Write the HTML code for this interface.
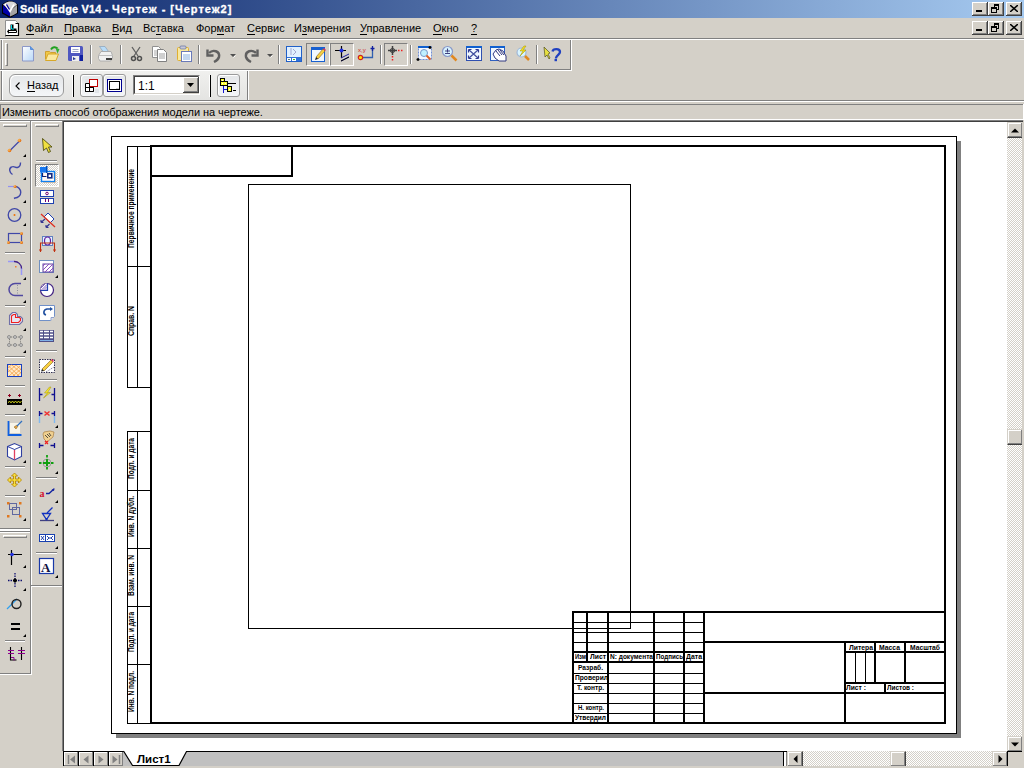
<!DOCTYPE html>
<html><head><meta charset="utf-8">
<style>
*{margin:0;padding:0;box-sizing:border-box}
html,body{width:1024px;height:768px;overflow:hidden;background:#D4D0C8;font-family:"Liberation Sans",sans-serif;font-size:11px;color:#000}
.a{position:absolute}
#title{left:0;top:0;width:1024px;height:18px;background:linear-gradient(to right,#0A246A,#A6CAF0)}
#title .t{top:2.5px;color:#fff;font-weight:bold;font-size:11px;white-space:nowrap;line-height:13px;-webkit-text-stroke:0.3px #fff}
.cb{width:16px;height:14px;background:#D4D0C8;box-shadow:inset -1px -1px #404040,inset 1px 1px #fff,inset -2px -2px #808080}
.menu span{position:absolute;top:22px;white-space:nowrap;line-height:13px}
u{text-decoration:none;border-bottom:1px solid #000}
.sep{width:2px;background:#808080;border-right:1px solid #fff}
.chk{background:#E6E4DF;box-shadow:inset 1px 1px #808080,inset -1px -1px #fff}
.sep1{top:45px;width:2px;height:19px;border-left:1px solid #808080;border-right:1px solid #fff}
.prs{width:24px;height:23px;border-top:1px solid #808080;border-left:1px solid #808080;border-right:1px solid #fff;border-bottom:1px solid #fff}
.rb{background:linear-gradient(#E4E6E8,#F4F6F8);border:1px solid #9A9A9A;box-shadow:inset 1px 1px #fff}
.trk{background-image:repeating-conic-gradient(#fff 0 25%,#D4D0C8 0 50%);background-size:2px 2px}
.sbtn{width:16px;height:16px;background:#D4D0C8;border-top:1px solid #D4D0C8;border-left:1px solid #D4D0C8;border-right:1px solid #404040;border-bottom:1px solid #404040;box-shadow:inset -1px -1px #808080,inset 1px 1px #fff}
.tbb{top:752px;width:15px;height:14px;background:#D4D0C8;border-left:1px solid #000;box-shadow:inset -1px -1px #808080,inset 1px 1px #fff}
.tb{position:absolute;font-size:8px;font-weight:bold;line-height:8px;white-space:nowrap;transform-origin:0 0}
.ts{position:absolute;font-size:9px;font-weight:bold;line-height:8px;white-space:nowrap;transform-origin:0 0}
</style></head><body>
<!-- title bar -->
<div id="title" class="a">
  <svg class="a" style="left:0;top:0" width="20" height="18">
    <path d="M2 4.5L5 2.5L8 1h4l3 1.5l3 2v9l-3 1.5l-4 2.5h-2l-4-2.5l-3-1.5z" fill="#000"/>
    <path d="M3 5l7 6v5.5l-3.5-2l-3.5-2z" fill="#0000A8"/>
    <path d="M10 11l7-6v8l-3.5 2l-3.5 1.5z" fill="#A4A4A4"/>
    <path d="M3 4.5l3-2l3-1h3l3 1l2 2l-7 6z" fill="#D8D8D8"/>
    <path d="M5 4l5 7.5l4-7" stroke="#fff" stroke-width="1.6" fill="none"/>
    <path d="M6.5 4.5l3 5" stroke="#0000A0" stroke-width="1.3"/>
  </svg>
  <div class="a t" style="left:20px;letter-spacing:0.15px">Solid Edge V14 -</div><div class="a t" style="left:112px;letter-spacing:1px">Чертеж - [Чертеж2]</div>
  <div class="a cb" style="left:972px;top:2px"><div class="a" style="left:4px;top:8px;width:6px;height:2px;background:#000"></div></div>
  <div class="a cb" style="left:988px;top:2px"><svg class="a" style="left:0;top:0" width="16" height="14" shape-rendering="crispEdges"><rect x="6" y="2" width="5" height="2"/><rect x="10" y="2" width="1" height="6"/><rect x="6" y="2" width="1" height="3"/><rect x="9" y="7" width="2" height="1"/><rect x="3" y="5" width="6" height="2"/><rect x="3" y="5" width="1" height="6"/><rect x="8" y="5" width="1" height="6"/><rect x="3" y="10" width="6" height="1"/></svg></div>
  <div class="a cb" style="left:1006px;top:2px"><svg class="a" style="left:4px;top:3px" width="8" height="7"><path d="M0 0L8 7M8 0L0 7" stroke="#000" stroke-width="1.5"/></svg></div>
</div>
<!-- menu bar -->
<div class="a menu" style="left:0;top:18px;width:1024px;height:20px">
  <svg class="a" style="left:5px;top:2px" width="15" height="17">
    <path d="M0.5 17V0.5h10l3 3" fill="none" stroke="#909090"/>
    <path d="M1 1h9.5l3 3v11h-12.5z" fill="#fff"/>
    <path d="M10.5 3.5h3v12h-13" fill="none" stroke="#000" stroke-width="1.2"/>
    <path d="M5.5 4.5h3v4h3v2h-6z" fill="#000"/>
    <path d="M6.5 5v4h2.5" stroke="#00E0F0" fill="none"/>
    <path d="M3.5 10.5h8v2h-8z" fill="#fff" stroke="#000"/>
    <path d="M4 9v5l-2-2.5z" fill="#000"/>
  </svg>
</div>
<div class="menu">
  <span style="left:26px"><u>Ф</u>айл</span>
  <span style="left:64px"><u>П</u>равка</span>
  <span style="left:112px"><u>В</u>ид</span>
  <span style="left:143px">Вс<u>т</u>авка</span>
  <span style="left:196px">Фор<u>м</u>ат</span>
  <span style="left:247px"><u>С</u>ервис</span>
  <span style="left:294px">И<u>з</u>мерения</span>
  <span style="left:360px"><u>У</u>правление</span>
  <span style="left:433px"><u>О</u>кно</span>
  <span style="left:471px"><u>?</u></span>
</div>
<div class="a cb" style="left:972px;top:21px"><div class="a" style="left:4px;top:8px;width:6px;height:2px;background:#000"></div></div>
<div class="a cb" style="left:988px;top:21px"><svg class="a" style="left:0;top:0" width="16" height="14" shape-rendering="crispEdges"><rect x="6" y="2" width="5" height="2"/><rect x="10" y="2" width="1" height="6"/><rect x="6" y="2" width="1" height="3"/><rect x="9" y="7" width="2" height="1"/><rect x="3" y="5" width="6" height="2"/><rect x="3" y="5" width="1" height="6"/><rect x="8" y="5" width="1" height="6"/><rect x="3" y="10" width="6" height="1"/></svg></div>
<div class="a cb" style="left:1006px;top:21px"><svg class="a" style="left:4px;top:3px" width="8" height="7"><path d="M0 0L8 7M8 0L0 7" stroke="#000" stroke-width="1.5"/></svg></div>

<!-- rebar lines -->
<div class="a" style="left:0;top:38px;width:1024px;height:1px;background:#808080"></div>
<div class="a" style="left:0;top:39px;width:1024px;height:1px;background:#fff"></div>


<!-- toolbar row 1 -->
<div class="a" style="left:1px;top:40px;width:1px;height:30px;background:#808080"></div>
<div class="a" style="left:2px;top:40px;width:1px;height:30px;background:#fff"></div>
<div class="a" style="left:0;top:69px;width:571px;height:1px;background:#808080"></div>
<div class="a" style="left:0;top:70px;width:572px;height:1px;background:#fff"></div>
<div class="a" style="left:570px;top:40px;width:1px;height:30px;background:#808080"></div>
<div class="a" style="left:571px;top:39px;width:1px;height:32px;background:#fff"></div>
<!-- gripper -->
<div class="a" style="left:5px;top:43px;width:3px;height:23px;border-left:1px solid #fff;border-top:1px solid #fff;border-right:1px solid #808080;border-bottom:1px solid #808080"></div>
<!-- separators -->
<div class="a sep1" style="left:90px"></div>
<div class="a sep1" style="left:120px"></div>
<div class="a sep1" style="left:198px"></div>
<div class="a sep1" style="left:278px"></div>
<div class="a sep1" style="left:380px"></div>
<div class="a sep1" style="left:410px"></div>
<div class="a sep1" style="left:536px"></div>
<!-- pressed buttons -->
<div class="a prs" style="left:306px;top:43px"></div>
<div class="a prs" style="left:330px;top:43px"></div>
<div class="a prs" style="left:384px;top:43px"></div>
<svg class="a" style="left:0;top:0" width="580" height="70">
 <!-- new -->
 <g transform="translate(22,46)">
  <defs><linearGradient id="gNew" x1="0" y1="0" x2="1" y2="1"><stop offset="0" stop-color="#fff"/><stop offset="1" stop-color="#B8D8F8"/></linearGradient></defs>
  <path d="M0.5 0.5h8l3 3v11.5h-11z" fill="url(#gNew)" stroke="#8C98C8"/>
  <path d="M8.5 0.5v3h3" fill="#5AA0E8" stroke="#5A8CD8"/>
 </g>
 <!-- open -->
 <g transform="translate(45,46)">
  <path d="M0.5 13V5.5h4l1 1h5v2" fill="#F0C848" stroke="#D0A030"/>
  <path d="M0.5 14.5l2.5-6.5h10.5l-2.5 6.5z" fill="#FAE8A0" stroke="#D8A828"/>
  <path d="M6 3.5c1.5-2.5 4.5-3 6.5-1" stroke="#20A020" stroke-width="2" fill="none"/>
  <path d="M10.5 2l4 1l-2 4.5z" fill="#30B030"/>
 </g>
 <!-- save -->
 <g transform="translate(68,46)">
  <rect x="0" y="0" width="15" height="15" rx="1.5" fill="#5058C0"/>
  <rect x="3" y="1" width="9" height="6" fill="#fff"/>
  <path d="M4.5 3.5h6M4.5 5.5h6" stroke="#A0A8C8"/>
  <rect x="4" y="10" width="7" height="5" fill="#F0F0F0"/>
  <path d="M5 11l3 2l-3 1z" fill="#283890"/>
  <rect x="12" y="9" width="3" height="6" fill="#1020A0"/>
 </g>
 <!-- print -->
 <g transform="translate(98,46)">
  <path d="M1.5 0.5h5.5l3.5 5h-5.5z" fill="#B8DCF8" stroke="#8AA0B8" stroke-width="0.7"/>
  <path d="M0.5 9.5l2.5-4h10l1.5 4v3l-2 2.5h-10.5l-1.5-2.5z" fill="#F2F2F2" stroke="#A8A8A8" stroke-width="0.9"/>
  <path d="M1 9.5h13.5" stroke="#C0C0C0"/>
  <rect x="8" y="12" width="6" height="2" fill="#404040"/>
 </g>
 <!-- cut -->
 <g transform="translate(131,46)" stroke="#505050" fill="none">
  <path d="M1 1l6 9M9 1l-6 9" stroke-width="1.3" stroke="#606060"/>
  <circle cx="2.5" cy="12.5" r="2" stroke-width="1.5"/>
  <circle cx="8.5" cy="12.5" r="2" stroke-width="1.5"/>
 </g>
 <!-- copy -->
 <g transform="translate(152,46)">
  <path d="M0.5 0.5h6l2 2v9h-8z" fill="#fff" stroke="#909090"/>
  <path d="M2 5h5M2 7h5M2 9h5" stroke="#A8A8A8"/>
  <path d="M5.5 3.5h6l3 3v9h-9z" fill="#fff" stroke="#808080"/>
  <path d="M7 8h6M7 10h6M7 12h6" stroke="#A0A0A0"/>
 </g>
 <!-- paste -->
 <g transform="translate(177,46)">
  <rect x="0.5" y="1.5" width="11" height="13" rx="1" fill="#F8E8A0" stroke="#E0B030"/>
  <rect x="3" y="0" width="6" height="3" rx="1" fill="#C8C8D8" stroke="#6070A0" stroke-width="0.7"/>
  <rect x="4.5" y="5.5" width="10" height="10" fill="#fff" stroke="#6A7AB8"/>
  <path d="M6 9h7M6 11h7M6 13h7" stroke="#88B0E0"/>
 </g>
 <!-- undo -->
 <g transform="translate(206,48)" fill="none" stroke="#606060" stroke-width="2.4">
  <path d="M3 5c4-4 11-2 10 4c-1 3-3 4-5 5"/>
  <path d="M1.5 1.5v6h6" stroke-linejoin="miter"/>
 </g>
 <path d="M230 54h6l-3 3z" fill="#505050"/><path d="M233.5 57.5l2-2" stroke="#fff"/>
 <!-- redo -->
 <g transform="translate(244,48)" fill="none" stroke="#606060" stroke-width="2.4">
  <path d="M12 5c-4-4-11-2-10 4c1 3 3 4 5 5"/>
  <path d="M13.5 1.5v6h-6"/>
 </g>
 <path d="M267 54h6l-3 3z" fill="#505050"/><path d="M270.5 57.5l2-2" stroke="#fff"/>
 <!-- sheet setup -->
 <g transform="translate(286,46)">
  <rect x="0.5" y="0.5" width="15" height="15" fill="#3070D8" stroke="#2060C8"/>
  <rect x="1" y="1" width="14" height="10" fill="#E0F0FF"/>
  <path d="M5 2v7M7 3l3 3l-3 3" stroke="#A0A8D0" fill="none"/>
  <rect x="1" y="12" width="4" height="3" fill="#fff"/><rect x="6" y="12" width="4" height="3" fill="#fff"/>
  <path d="M2 13.5h2" stroke="#608080"/><path d="M7 13.5h2" stroke="#30C030"/>
 </g>
 <!-- draw (pencil window) -->
 <g transform="translate(311,47)">
  <rect x="0" y="0" width="14" height="15" fill="#1860D0"/>
  <rect x="1" y="3" width="12" height="11" fill="#F0F8FF"/>
  <path d="M5 10l7-8l2 2l-7 8z" fill="#F8D040" stroke="#806020" stroke-width="0.6"/>
  <path d="M5 10l-1 3l3-1z" fill="#202020"/>
  <path d="M12 2l1-1l2 2l-1 1z" fill="#E03060"/>
 </g>
 <!-- constraint -->
 <g transform="translate(334,46)">
  <path d="M1 4.5h11M7.5 0v12" stroke="#000" stroke-width="1.2"/>
  <circle cx="7.5" cy="4.5" r="2" fill="#2030E0"/>
  <path d="M7 12l8-4M7 15l8-4" stroke="#2020A0" stroke-width="1"/>
  <path d="M7 15l8-4" stroke="#000"/>
 </g>
 <!-- xy -->
 <g transform="translate(358,46)">
  <text x="0" y="6" font-size="6" fill="#D02020" font-family="Liberation Sans">x,y</text>
  <path d="M4 11.5h10.5v-9.5" stroke="#3060B0" stroke-width="1.3" fill="none"/>
  <circle cx="2.5" cy="11.5" r="2.2" fill="#FFE000" stroke="#D02020" stroke-width="1.2"/>
  <path d="M14.5 0v5M12.5 2.5h4" stroke="#1020A0" stroke-width="1.3"/>
 </g>
 <!-- crosshair red dots -->
 <g transform="translate(388,46)">
  <path d="M0 4.5h9M4.5 0v9" stroke="#404040" stroke-width="1.5"/>
  <circle cx="4.5" cy="4.5" r="2" fill="none" stroke="#404040" stroke-width="1.2"/>
  <path d="M10 4.5h6M4.5 10v6" stroke="#F02020" stroke-width="1.5" stroke-dasharray="1.5 1.5"/>
 </g>
 <!-- zoom area -->
 <g transform="translate(417,46)">
  <rect x="1.5" y="0.5" width="13" height="13" fill="#F4F8FF" stroke="#7090D8" stroke-dasharray="2 1"/>
  <rect x="1" y="0" width="13" height="2" fill="#1060D0"/>
  <circle cx="7" cy="7" r="3.5" fill="#C0F0FF" stroke="#7898C8"/>
  <path d="M9.5 9.5l4 4" stroke="#E06020" stroke-width="2"/>
  <path d="M13 0v3M11.5 1.5h3M1 12v3M-0.5 13.5h3" stroke="#000" stroke-width="1.3"/>
 </g>
 <!-- zoom -->
 <g transform="translate(442,46)">
  <circle cx="5.5" cy="5.5" r="5" fill="#D8F4FF" stroke="#8898C8" stroke-width="1.2"/>
  <path d="M3 5h5M5.5 2.5v4M3 7.5h5" stroke="#404080" stroke-width="1.1"/>
  <path d="M9.5 9.5l5 5" stroke="#E08820" stroke-width="2.5"/>
 </g>
 <!-- fit -->
 <g transform="translate(466,46)">
  <rect x="0.5" y="0.5" width="15" height="14" fill="#F0F8FF" stroke="#3050B0"/>
  <rect x="0" y="0" width="16" height="2" fill="#1060D0"/>
  <path d="M3 4l9 8M12 4l-9 8" stroke="#4050A0" stroke-width="1.3"/>
  <path d="M2.5 3.5h3M2.5 3.5v3M12.5 3.5h-3M12.5 3.5v3M2.5 12.5h3M2.5 12.5v-3M12.5 12.5h-3M12.5 12.5v-3" stroke="#303890" stroke-width="1.2"/>
 </g>
 <!-- pan -->
 <g transform="translate(490,46)">
  <rect x="0.5" y="0.5" width="14" height="14" fill="#F0F8FF" stroke="#3060C0"/>
  <rect x="0" y="0" width="15" height="2" fill="#1060D0"/>
  <path d="M5 12l-2-4l3-4l3 -1l4 2l3 5v5h-7z" fill="#fff" stroke="#303880"/>
  <path d="M6 5l4 5M8 4l4 5M10 4l4 5" stroke="#303880"/>
 </g>
 <!-- zoom lightning -->
 <g transform="translate(516,46)">
  <circle cx="5.5" cy="6.5" r="4.5" fill="#D8F4FF" stroke="#A0B8D8" stroke-width="1.2"/>
  <path d="M8 0l-4 5h3l-3 5l6-6h-3l3-4z" fill="#F8E020" stroke="#A09000" stroke-width="0.5"/>
  <path d="M9 10l4 4" stroke="#E08820" stroke-width="2.5"/>
 </g>
 <!-- help -->
 <g transform="translate(544,47)">
  <path d="M0 0l6 6l-2 1l2 4l-1 1l-2-4l-2 2z" fill="#E8E040" stroke="#505020" stroke-width="0.7"/>
  <path d="M8.5 4.5c0.5-3 7.5-3.5 7.5 0.5c0 2.5-3.5 3-4 6v0.5" stroke="#2040C0" stroke-width="2.3" fill="none"/><rect x="10.5" y="12" width="2.5" height="2.2" fill="#2040C0"/>
 </g>
</svg>

<!-- toolbar row 2 (ribbon) -->
<div class="a" style="left:2px;top:71px;width:246px;height:29px;background:linear-gradient(#F0F0EE,#E4E4E2)"></div>
<div class="a" style="left:1px;top:71px;width:1px;height:30px;background:#808080"></div>
<div class="a" style="left:2px;top:71px;width:1px;height:30px;background:#fff"></div>
<div class="a" style="left:247px;top:71px;width:1px;height:29px;background:#808080"></div>
<div class="a" style="left:248px;top:71px;width:1px;height:29px;background:#fff"></div>

<div class="a rb" style="left:9px;top:74px;width:55px;height:23px;border-radius:6px"></div>
<svg class="a" style="left:14px;top:81px" width="8" height="10"><path d="M5.5 1.5L2 5l3.5 3.5" stroke="#000" stroke-width="1.1" fill="none"/></svg>
<div class="a" style="left:27px;top:79px;font-size:11px;line-height:13px;white-space:nowrap"><u>Н</u>азад</div>
<div class="a" style="left:73px;top:75px;width:1px;height:22px;background:#000"></div>
<div class="a" style="left:72px;top:75px;width:1px;height:22px;background:#fff"></div>
<div class="a rb" style="left:80px;top:74px;width:23px;height:23px;border-radius:3px"></div>
<div class="a rb" style="left:103px;top:74px;width:23px;height:23px;border-radius:3px"></div>
<svg class="a" style="left:85px;top:79px" width="14" height="14">
 <rect x="0" y="0" width="4" height="4" fill="#E0E4E8"/><rect x="10" y="10" width="4" height="4" fill="#E0E4E8"/>
 <rect x="4.5" y="0.5" width="8" height="7" fill="#fff" stroke="#C00000"/>
 <path d="M0.5 4.5h4v8h-4zM0.5 8.5h8v4h-8zM4.5 8.5v4" fill="#fff" stroke="#000"/>
 <path d="M4.5 8.5h4v4" fill="none" stroke="#000"/>
</svg>
<svg class="a" style="left:107px;top:79px" width="15" height="14">
 <rect x="0.5" y="0.5" width="14" height="12" fill="#fff" stroke="#000090"/>
 <rect x="2.5" y="2.5" width="10" height="8" fill="#fff" stroke="#000"/>
 <path d="M9 9.5h3" stroke="#D0D0D0"/>
</svg>
<!-- combo -->
<div class="a" style="left:133px;top:75px;width:67px;height:20px;background:#fff;border-top:1px solid #808080;border-left:1px solid #808080;border-right:1px solid #fff;border-bottom:1px solid #fff"></div>
<div class="a" style="left:134px;top:76px;width:65px;height:18px;border-top:1px solid #404040;border-left:1px solid #404040;border-right:1px solid #D4D0C8;border-bottom:1px solid #D4D0C8"></div>
<div class="a" style="left:138px;top:79px;font-size:12px;line-height:14px">1:1</div>
<div class="a cb" style="left:183px;top:77px;width:16px;height:16px"><svg class="a" style="left:4px;top:6px" width="8" height="4"><path d="M0 0h7l-3.5 4z" fill="#000"/></svg></div>
<div class="a" style="left:210px;top:75px;width:1px;height:22px;background:#000"></div>
<div class="a" style="left:209px;top:75px;width:1px;height:22px;background:#fff"></div>
<div class="a rb" style="left:217px;top:74px;width:23px;height:23px;border-radius:3px"></div>
<svg class="a" style="left:220px;top:78px" width="17" height="16" shape-rendering="crispEdges">
 <rect x="0.5" y="0.5" width="4" height="4" fill="#FFFF30" stroke="#000"/>
 <rect x="0.5" y="3.5" width="7" height="4" fill="#FFFF30" stroke="#000"/>
 <rect x="2" y="1.5" width="1" height="1" fill="#fff"/><rect x="2" y="5" width="1" height="1" fill="#fff"/><rect x="5" y="5" width="1" height="1" fill="#fff"/>
 <rect x="8" y="5" width="8" height="1" fill="#000"/>
 <rect x="3" y="8" width="1" height="7" fill="#1818D0"/>
 <rect x="4" y="11" width="3" height="1" fill="#1818D0"/>
 <rect x="7.5" y="8.5" width="4" height="5" fill="#FFFF30" stroke="#000"/>
 <rect x="9" y="10.5" width="1" height="1" fill="#fff"/>
 <rect x="13" y="12" width="3" height="1" fill="#000"/>
</svg>
<!-- etched lines -->
<div class="a" style="left:0;top:100px;width:1024px;height:1px;background:#808080"></div>
<div class="a" style="left:0;top:101px;width:1024px;height:1px;background:#fff"></div>

<!-- prompt bar -->
<div class="a" style="left:0;top:104px;width:1023px;height:1px;background:#808080"></div>
<div class="a" style="left:1023px;top:104px;width:1px;height:16px;background:#fff"></div>
<div class="a" style="left:0;top:105px;width:1px;height:14px;background:#808080"></div>
<div class="a" style="left:2px;top:106px;line-height:13px;white-space:nowrap;letter-spacing:-0.05px">Изменить способ отображения модели на чертеже.</div>
<div class="a" style="left:0;top:119px;width:1024px;height:1px;background:#fff"></div>

<!-- drawing area -->
<div class="a" style="left:0;top:120px;width:1023px;height:1px;background:#808080"></div>
<div class="a" style="left:62px;top:120px;width:961px;height:631px;background:#fff;border-left:1px solid #808080;border-top:1px solid #808080"></div>
<div class="a" style="left:63px;top:121px;width:960px;height:630px;border-left:1px solid #404040;border-top:1px solid #404040"></div>

<!-- left toolbars -->
<div class="a" style="left:30px;top:121px;width:1px;height:553px;background:#808080"></div>
<div class="a" style="left:31px;top:121px;width:1px;height:554px;background:#fff"></div>
<div class="a" style="left:0px;top:121px;width:30px;height:1px;background:#fff"></div>
<div class="a" style="left:32px;top:121px;width:30px;height:1px;background:#fff"></div>
<div class="a" style="left:0px;top:528px;width:30px;height:1px;background:#808080"></div>
<div class="a" style="left:0px;top:529px;width:30px;height:2px;background:#fff"></div>
<div class="a" style="left:0px;top:531px;width:30px;height:1px;background:#808080"></div>
<div class="a" style="left:0px;top:532px;width:30px;height:1px;background:#fff"></div>
<div class="a" style="left:0px;top:673px;width:30px;height:1px;background:#808080"></div>
<div class="a" style="left:0px;top:674px;width:32px;height:1px;background:#fff"></div>
<div class="a" style="left:31px;top:585px;width:31px;height:1px;background:#808080"></div>
<div class="a" style="left:32px;top:586px;width:30px;height:1px;background:#fff"></div>
<div class="a" style="left:3px;top:124px;width:24px;height:3px;border-left:1px solid #fff;border-top:1px solid #fff;border-right:1px solid #808080;border-bottom:1px solid #808080"></div>
<div class="a" style="left:35px;top:124px;width:24px;height:3px;border-left:1px solid #fff;border-top:1px solid #fff;border-right:1px solid #808080;border-bottom:1px solid #808080"></div>
<div class="a" style="left:3px;top:535px;width:24px;height:3px;border-left:1px solid #fff;border-top:1px solid #fff;border-right:1px solid #808080;border-bottom:1px solid #808080"></div>
<div class="a" style="left:5px;top:252px;width:20px;height:1px;background:#808080"></div>
<div class="a" style="left:5px;top:253px;width:20px;height:1px;background:#fff"></div>
<div class="a" style="left:5px;top:305px;width:20px;height:1px;background:#808080"></div>
<div class="a" style="left:5px;top:306px;width:20px;height:1px;background:#fff"></div>
<div class="a" style="left:5px;top:356px;width:20px;height:1px;background:#808080"></div>
<div class="a" style="left:5px;top:357px;width:20px;height:1px;background:#fff"></div>
<div class="a" style="left:5px;top:385px;width:20px;height:1px;background:#808080"></div>
<div class="a" style="left:5px;top:386px;width:20px;height:1px;background:#fff"></div>
<div class="a" style="left:5px;top:414px;width:20px;height:1px;background:#808080"></div>
<div class="a" style="left:5px;top:415px;width:20px;height:1px;background:#fff"></div>
<div class="a" style="left:5px;top:466px;width:20px;height:1px;background:#808080"></div>
<div class="a" style="left:5px;top:467px;width:20px;height:1px;background:#fff"></div>
<div class="a" style="left:5px;top:495px;width:20px;height:1px;background:#808080"></div>
<div class="a" style="left:5px;top:496px;width:20px;height:1px;background:#fff"></div>
<div class="a" style="left:5px;top:640px;width:20px;height:1px;background:#808080"></div>
<div class="a" style="left:5px;top:641px;width:20px;height:1px;background:#fff"></div>
<div class="a" style="left:36px;top:160px;width:21px;height:1px;background:#808080"></div>
<div class="a" style="left:36px;top:161px;width:21px;height:1px;background:#fff"></div>
<div class="a" style="left:36px;top:350px;width:21px;height:1px;background:#808080"></div>
<div class="a" style="left:36px;top:351px;width:21px;height:1px;background:#fff"></div>
<div class="a" style="left:36px;top:379px;width:21px;height:1px;background:#808080"></div>
<div class="a" style="left:36px;top:380px;width:21px;height:1px;background:#fff"></div>
<div class="a" style="left:36px;top:477px;width:21px;height:1px;background:#808080"></div>
<div class="a" style="left:36px;top:478px;width:21px;height:1px;background:#fff"></div>
<div class="a" style="left:36px;top:552px;width:21px;height:1px;background:#808080"></div>
<div class="a" style="left:36px;top:553px;width:21px;height:1px;background:#fff"></div>
<div class="a" style="left:35px;top:164px;width:24px;height:23px;border-top:1px solid #808080;border-left:1px solid #808080;border-right:1px solid #fff;border-bottom:1px solid #fff;background-image:repeating-conic-gradient(#fff 0 25%,#D4D0C8 0 50%);background-size:2px 2px"></div>
<svg class="a" style="left:0;top:0" width="64" height="680">
<defs>
 <radialGradient id="org" cx="0.35" cy="0.35" r="0.7"><stop offset="0" stop-color="#FFC060"/><stop offset="1" stop-color="#E06000"/></radialGradient>
</defs>
<g id="tris" fill="#000">
 <path d="M26 154v3h-3z"/><path d="M26 177v3h-3z"/><path d="M26 200v3h-3z"/><path d="M26 223v3h-3z"/>
 <path d="M26 277v3h-3z"/><path d="M26 300v3h-3z"/><path d="M26 328v3h-3z"/><path d="M26 350v3h-3z"/>
 <path d="M26 408v3h-3z"/><path d="M26 460v3h-3z"/><path d="M26 489v3h-3z"/><path d="M26 518v3h-3z"/>
 <path d="M26 565v3h-3z"/><path d="M26 588v3h-3z"/><path d="M26 634v3h-3z"/>
 <path d="M58 275v3h-3z"/><path d="M58 425v3h-3z"/><path d="M58 471v3h-3z"/><path d="M58 500v3h-3z"/>
 <path d="M58 523v3h-3z"/><path d="M58 546v3h-3z"/><path d="M58 575v3h-3z"/>
</g>
<!-- A1 -->
<!-- line -->
<path d="M10 150.5L19.5 141" stroke="#4048A8" stroke-width="1.3"/>
<circle cx="9.5" cy="150.5" r="1.8" fill="url(#org)"/><circle cx="19.5" cy="140.5" r="1.8" fill="url(#org)"/>
<!-- curve -->
<path d="M12.5 174.5c-3-2-4-6-1-7.5c2.5-1.5 4 1 6 0.5c2-0.5 3-3 3-5" stroke="#4048A8" stroke-width="1.4" fill="none"/>
<!-- arc -->
<path d="M8 186.5h7" stroke="#9090F0" stroke-width="1.2"/>
<path d="M15 186.5a5.5 5.5 0 0 1 0 11.5l-1 0.5" stroke="#4048A8" stroke-width="1.4" fill="none"/>
<circle cx="15" cy="186.5" r="1.5" fill="url(#org)"/>
<!-- circle -->
<circle cx="14.5" cy="215" r="6.3" stroke="#4048A8" stroke-width="1.3" fill="none"/>
<circle cx="14.5" cy="215" r="1" fill="#F07000"/>
<!-- rect -->
<rect x="8.5" y="233.5" width="13" height="9" stroke="#4048A8" stroke-width="1.2" fill="none"/>
<circle cx="8.5" cy="242.5" r="1.5" fill="url(#org)"/><circle cx="21.5" cy="242.5" r="1.5" fill="url(#org)"/><circle cx="21.5" cy="233.5" r="1.5" fill="url(#org)"/>
<!-- fillet -->
<path d="M8 261.5h6" stroke="#9898F8" stroke-width="1.5"/><path d="M21.5 268v7" stroke="#9898F8" stroke-width="1.5"/>
<path d="M14 261.5a7 7 0 0 1 7.5 7" stroke="#40208A" stroke-width="1.3" fill="none"/>
<rect x="15" y="266" width="1.5" height="1.5" fill="#F08030"/>
<!-- offset C -->
<path d="M21 283.5h-6a5.5 5.5 0 0 0 0 12h8" stroke="#5048A0" stroke-width="1.5" fill="none"/>
<path d="M17.5 285v10" stroke="#9090A0" stroke-width="1" stroke-dasharray="1 1.5"/>
<!-- shape -->
<path d="M9.5 315.5l3-3h3l2 2v2h3l2 2v3l-3 3h-10z" fill="#E8E4F0" stroke="#7070A8" stroke-width="1.1"/>
<path d="M11.5 316l2-1.5h2v3h4l1 1v2l-2 2h-7z" fill="none" stroke="#F02020" stroke-width="1.1"/>
<!-- pattern points -->
<g stroke="#808080" stroke-width="0.8" fill="#C8C8C8">
<path d="M9 337h12M9 345h12M9.5 337v8M20.5 337v8" stroke-dasharray="1 1.2" fill="none" stroke="#505050"/>
<circle cx="9" cy="337" r="1.5"/><circle cx="15" cy="337" r="1.5"/><circle cx="21" cy="337" r="1.5"/>
<circle cx="9" cy="345" r="1.5"/><circle cx="15" cy="345" r="1.5"/><circle cx="21" cy="345" r="1.5"/>
</g>
<!-- hatch box -->
<rect x="7.5" y="364.5" width="14" height="12" fill="#FFE8C8" stroke="#1840C0" stroke-width="1"/>
<path d="M8 368l4-3.5M8 372l8-7M9 376l11-10M13 376l8-7M17 376l4-3.5M12 365l9 8M8 365.5l11 10.5M8 369.5l7 6.5M16 365l5 4.5" stroke="#F09838" stroke-width="0.7"/>
<!-- dim -->
<path d="M8 395.5h3M9.5 394v3M18 395.5h3M19.5 394v3" stroke="#900020" stroke-width="1"/>
<rect x="7" y="399" width="15" height="6" fill="#000"/>
<path d="M8 402.5l1.5-1l1.5 1l1.5-1l1.5 1l1.5-1l1.5 1l1.5-1l1.5 1l1.5-1" stroke="#F0F020" stroke-width="1" fill="none"/>
<!-- smart dim -->
<path d="M8.5 421v14h13" stroke="#1060E0" stroke-width="1.8" fill="none"/>
<rect x="10" y="423" width="10" height="10" fill="#F8F4E8"/>
<path d="M14 427l3-2l1 1l-2 3z" fill="#E0A040" stroke="#806020" stroke-width="0.5"/>
<path d="M17 426l5-5" stroke="#3070C0" stroke-width="1.2"/>
<!-- cube -->
<path d="M7.5 446.5l7-3l7 3v10l-7 3.5l-7-3.5z" fill="#fff" stroke="#3040A0" stroke-width="1.1"/>
<path d="M7.5 446.5l7 3l7-3M14.5 449.5v10" stroke="#3040A0" stroke-width="1" fill="none"/>
<path d="M14.5 450v9.5" stroke="#E04060" stroke-width="1.3"/>
<!-- move -->
<path d="M14.5 473l3 3h-2v3h3v-2l3 3l-3 3v-2h-3v3h2l-3 3l-3-3h2v-3h-3v2l-3-3l3-3v2h3v-3h-2z" fill="#F8E040" stroke="#B08000" stroke-width="0.8"/>
<!-- scale -->
<rect x="9.5" y="503.5" width="7" height="6" fill="none" stroke="#6068A0"/>
<rect x="12.5" y="507.5" width="7" height="7" fill="none" stroke="#6068A0"/>
<rect x="7" y="502" width="2.5" height="2.5" fill="#E07820"/><rect x="19" y="502" width="2.5" height="2.5" fill="#E07820"/>
<rect x="7" y="515" width="2.5" height="2.5" fill="#E07820"/><rect x="19" y="515" width="2.5" height="2.5" fill="#E07820"/>
<!-- A2 -->
<!-- intersect -->
<path d="M11.5 550v15M8 554.5h14" stroke="#000" stroke-width="1.2"/>
<circle cx="12" cy="554.5" r="1.8" fill="#2030E0"/>
<!-- point -->
<path d="M15 573v15M8 580.5h14" stroke="#101070" stroke-width="1.3" stroke-dasharray="1.5 1"/>
<path d="M13 580.5h4M15 578.5v4" stroke="#000" stroke-width="2"/>
<!-- tangent -->
<path d="M7 609l10-10" stroke="#30A0F0" stroke-width="1.2"/>
<circle cx="16.5" cy="604" r="4.5" fill="none" stroke="#202020" stroke-width="1.4"/>
<!-- equal -->
<path d="M11 624h9M11 629h9" stroke="#000" stroke-width="1.8"/>
<!-- parallel/collinear -->
<path d="M10.5 647v13h6M21.5 647v13" stroke="#000" stroke-width="1.1" fill="none"/>
<path d="M8 650.5h6M8 653.5h6M18 650.5h7M18 653.5h7" stroke="#900090" stroke-width="1"/>
<path d="M11 657.5h3v3" stroke="#900090" fill="none"/>
<!-- B -->
<!-- select arrow -->
<path d="M42.5 138.5l9.5 8.5h-3.5l2 4.5l-2 1l-2-4.5l-3 2.5z" fill="#F0E040" stroke="#404000" stroke-width="0.8"/>
<!-- pressed icon -->
<path d="M43 182.5h12.5v-10" stroke="#F0C8A0" fill="none"/>
<rect x="41.5" y="171.5" width="13" height="10" fill="#FFF8F4" stroke="#1080F0" stroke-width="1.4"/>
<rect x="40" y="167" width="7" height="5.5" fill="#1878F0"/>
<rect x="46" y="166" width="1.5" height="7" fill="#0050C0"/>
<rect x="47.8" y="173.8" width="4" height="4" fill="#fff" stroke="#102880" stroke-width="1.6"/>
<path d="M42.5 173v3.5h4" stroke="#102070" stroke-width="1.2" fill="none"/>
<rect x="51" y="179" width="3" height="1.5" fill="#fff"/>
<!-- two boxes -->
<rect x="40.5" y="190.5" width="13" height="6" fill="#fff" stroke="#2040B0"/>
<circle cx="47" cy="193.5" r="1.3" fill="none" stroke="#700070"/>
<rect x="40.5" y="198.5" width="13" height="5" fill="#fff" stroke="#2040B0"/>
<path d="M45.5 199v3M48.5 199v3" stroke="#700070"/>
<!-- section cut -->
<path d="M48 213l6 6l-4 4l-6-6z" fill="#fff" stroke="#2040B0"/>
<path d="M41 214l14 13" stroke="#E03020" stroke-width="1.3"/>
<path d="M41 222.5l4-3.5M41 222.5v-2.5M41 222.5h2.5M46 227.5l3.5-3.5M46 227.5v-2.5M46 227.5h2.5" stroke="#303090" stroke-width="1.1"/>
<!-- detail / broken-out -->
<rect x="42.5" y="236.5" width="10" height="9" fill="#E8F0FF" stroke="#6080C0"/>
<ellipse cx="47.5" cy="241" rx="3" ry="4" fill="none" stroke="#6020A0" stroke-width="1.2"/>
<path d="M40.5 252v-9h14v9M39 250h3M53 250h3" stroke="#C03010" stroke-width="1.1" fill="none"/>
<!-- hatch view -->
<rect x="39.5" y="260.5" width="14" height="12" fill="#fff" stroke="#7090C0"/>
<rect x="43" y="264" width="10" height="8" fill="#fff" stroke="#6040A0"/>
<path d="M43 270l6-6M45 272l8-8M49 272l4-4M43 266l2-2" stroke="#9050C0" stroke-width="1"/>
<!-- circle hatch -->
<circle cx="47" cy="290" r="6.5" fill="#fff" stroke="#402080" stroke-width="1.2"/>
<path d="M40.5 290a6.5 6.5 0 0 1 6.5-6.5v6.5z" fill="#fff"/>
<path d="M41 288l4-4M41 290.5l6-6M43 290.5l4-4M45 290.5l2-2" stroke="#7050B0" stroke-width="0.9"/>
<path d="M40.5 290.5h7v-7" stroke="#2040B0" stroke-width="1.2" fill="none"/>
<!-- rotate view -->
<path d="M39.5 305.5h15v11l-4 4h-11z" fill="#fff" stroke="#7090C8"/>
<path d="M51 320.5v-3h3" fill="#E0E8F8" stroke="#90A0C8"/>
<path d="M46 315c-3-1-3-5 1-6h4" stroke="#2050A0" stroke-width="1.6" fill="none"/>
<path d="M50 307l3 2l-3 2z" fill="#2050A0"/>
<!-- table -->
<rect x="39" y="330" width="15" height="12" fill="#505088"/>
<path d="M40 331.5h3M44 331.5h5M50 331.5h3M40 334.5h3M44 334.5h5M50 334.5h3M40 337.5h3M44 337.5h5M50 337.5h3" stroke="#fff" stroke-width="1.6"/>
<path d="M40 340.5h13" stroke="#80B0E8" stroke-width="1"/>
<!-- pencil dashed -->
<rect x="39.5" y="359.5" width="15" height="13" fill="#fff" stroke="#303050" stroke-dasharray="1.5 1"/>
<path d="M42 369l9-9l2 2l-9 9z" fill="#F8D040" stroke="#806020" stroke-width="0.6"/>
<path d="M42 369l-1 2.5l3-0.5z" fill="#202020"/>
<path d="M51 360l1-1l2 2l-1 1z" fill="#E03060"/>
<path d="M46 372l8-5" stroke="#505070" stroke-width="0.8" stroke-dasharray="1 1"/>
<!-- lightning dim -->
<path d="M39.5 388v13M54.5 388v13M39.5 394.5h3M51.5 394.5h3" stroke="#101090" stroke-width="1.3"/>
<path d="M49.5 387l-5 6h3l-4 5l7-5.5h-3l3.5-5.5z" fill="#F8E830" stroke="#A09000" stroke-width="0.5"/>
<!-- dim x -->
<path d="M39.5 411v5M54.5 411v5M39.5 413.5h3M51.5 413.5h3" stroke="#101090" stroke-width="1.3"/>
<path d="M39.5 416v7M54.5 416v7" stroke="#80B8F0" stroke-width="1.4"/>
<path d="M44.5 411.5l5 4M49.5 411.5l-5 4" stroke="#F03030" stroke-width="1.5"/>
<!-- hand dim -->
<path d="M43 434l1-2l6-1l4 1l-1 5l-6 5l-3-3z" fill="#F0D090" stroke="#A07030" stroke-width="0.6"/>
<path d="M45 435l3 3M47 434l3 3M49 433l2 3" stroke="#303030" stroke-width="0.8"/>
<path d="M39.5 443v5M54.5 443v5M39.5 445.5h4M50.5 445.5h4" stroke="#101090" stroke-width="1.3"/>
<path d="M45 441l3 3M48 441l-3 3" stroke="#F02020" stroke-width="1.2"/>
<!-- green cross -->
<circle cx="47" cy="463" r="4" fill="none" stroke="#909090" stroke-width="0.8"/>
<path d="M47 455v16M39 463h16" stroke="#10A010" stroke-width="1.8" stroke-dasharray="2.5 1.5"/>
<path d="M47 460v6M44 463h6" stroke="#10A010" stroke-width="2"/>
<!-- a/ -->
<text x="39.5" y="497" font-family="Liberation Serif" font-weight="bold" font-size="10" fill="#D01030">a</text>
<path d="M46 493.5h3l5-4.5" stroke="#1020A0" stroke-width="1.3" fill="none"/>
<path d="M54.5 488l-0.5 3l-2.5-1z" fill="#1020A0"/>
<!-- weld -->
<path d="M40 520.5h14" stroke="#404080" stroke-width="1.3"/>
<path d="M42.5 513.5h8l-4 6z" fill="none" stroke="#1030C0" stroke-width="1.3"/>
<path d="M47 513l5.5-5.5" stroke="#1030C0" stroke-width="1.3"/>
<rect x="45.5" y="518" width="2" height="2" fill="#1030C0"/>
<!-- feature control -->
<rect x="39" y="534" width="16" height="8" fill="#1840B0"/>
<rect x="40" y="535" width="5" height="6" fill="#fff"/><rect x="46" y="535" width="8" height="6" fill="#fff"/>
<path d="M41 536l3 4M44 536l-3 4M47 536l2 2l-2 2M53 536l-2 2l2 2M49 538h2" stroke="#1030A0" stroke-width="0.9" fill="none"/>
<!-- A text -->
<rect x="39.5" y="558.5" width="14" height="15" fill="#fff" stroke="#1838A8" stroke-width="1.2"/>
<text x="41" y="571.5" font-family="Liberation Serif" font-weight="bold" font-size="13" fill="#101040">A</text>
</svg>

<svg class="a" style="left:0;top:0" width="1024" height="768" shape-rendering="crispEdges">
  <!-- sheet shadow -->
  <rect x="957" y="141" width="4" height="597" fill="#808080"/>
  <rect x="116" y="734" width="845" height="4" fill="#808080"/>
  <!-- sheet -->
  <rect x="111.5" y="136.5" width="845" height="597" fill="#fff" stroke="#000" stroke-width="1"/>
  <g fill="#000">
  <!-- thick frame -->
  <rect x="150" y="145" width="796" height="2"/>
  <rect x="150" y="722" width="796" height="2"/>
  <rect x="150" y="145" width="2" height="579"/>
  <rect x="944" y="145" width="2" height="579"/>
  <!-- top-left box -->
  <rect x="291" y="145" width="2" height="32"/>
  <rect x="150" y="175" width="143" height="2"/>
  <!-- left strip upper -->
  <rect x="127" y="146" width="23" height="1"/>
  <rect x="127" y="146" width="1" height="242"/>
  <rect x="137" y="146" width="1" height="242"/>
  <rect x="127" y="266" width="23" height="1"/>
  <rect x="127" y="387" width="23" height="1"/>
  <!-- left strip lower -->
  <rect x="127" y="431" width="23" height="1"/>
  <rect x="127" y="431" width="1" height="293"/>
  <rect x="137" y="431" width="1" height="293"/>
  <rect x="127" y="490" width="23" height="1"/>
  <rect x="127" y="548" width="23" height="1"/>
  <rect x="127" y="606" width="23" height="1"/>
  <rect x="127" y="664" width="23" height="1"/>
  <rect x="127" y="723" width="23" height="1"/>
  <!-- view rect -->
  <rect x="248" y="184" width="383" height="1"/>
  <rect x="248" y="628" width="383" height="1"/>
  <rect x="248" y="184" width="1" height="445"/>
  <rect x="630" y="184" width="1" height="445"/>
  <!-- title block -->
  <rect x="572" y="611" width="374" height="2"/>
  <rect x="572" y="611" width="2" height="113"/>
  <rect x="586" y="611" width="2" height="51"/>
  <rect x="607" y="611" width="2" height="113"/>
  <rect x="653" y="611" width="2" height="113"/>
  <rect x="683" y="611" width="2" height="113"/>
  <rect x="703" y="611" width="2" height="113"/>
  <rect x="572" y="622" width="132" height="1"/>
  <rect x="572" y="632" width="132" height="1"/>
  <rect x="572" y="642" width="132" height="1"/>
  <rect x="572" y="651" width="132" height="2"/>
  <rect x="572" y="661" width="132" height="2"/>
  <rect x="572" y="673" width="132" height="1"/>
  <rect x="572" y="683" width="132" height="1"/>
  <rect x="572" y="693" width="132" height="1"/>
  <rect x="572" y="703" width="132" height="1"/>
  <rect x="572" y="713" width="132" height="1"/>
  <!-- right section -->
  <rect x="704" y="641" width="242" height="2"/>
  <rect x="704" y="692" width="242" height="2"/>
  <rect x="844" y="641" width="2" height="83"/>
  <rect x="846" y="651" width="100" height="2"/>
  <rect x="846" y="682" width="100" height="2"/>
  <rect x="855" y="653" width="1" height="29"/>
  <rect x="865" y="653" width="1" height="29"/>
  <rect x="874" y="641" width="2" height="42"/>
  <rect x="904" y="641" width="2" height="42"/>
  <rect x="884" y="683" width="2" height="10"/>
  </g>
</svg>

<!-- sheet text -->
<div class="tb" style="left:575px;top:653.2px;transform:scaleX(0.712)">Изм</div>
<div class="tb" style="left:590px;top:653.2px;transform:scaleX(0.846)">Лист</div>
<div class="tb" style="left:610px;top:653.2px;transform:scaleX(0.818)">N: документа</div>
<div class="tb" style="left:656px;top:653.2px;transform:scaleX(0.777)">Подпись</div>
<div class="tb" style="left:686px;top:653.2px;transform:scaleX(0.864)">Дата</div>
<div class="tb" style="left:578px;top:663.7px;transform:scaleX(0.826)">Разраб.</div>
<div class="tb" style="left:575px;top:673.7px;transform:scaleX(0.832)">Проверил</div>
<div class="tb" style="left:577px;top:683.7px;transform:scaleX(0.816)">Т. контр.</div>
<div class="tb" style="left:578px;top:703.7px;transform:scaleX(0.746)">Н. контр.</div>
<div class="tb" style="left:575px;top:713.7px;transform:scaleX(0.817)">Утвердил</div>
<div class="tb" style="left:849px;top:643.7px;transform:scaleX(0.850)">Литера</div>
<div class="tb" style="left:879px;top:643.7px;transform:scaleX(0.852)">Масса</div>
<div class="tb" style="left:910px;top:643.7px;transform:scaleX(0.842)">Масштаб</div>
<div class="tb" style="left:846px;top:683.7px;transform:scaleX(0.840)">Лист :</div>
<div class="tb" style="left:887px;top:683.7px;transform:scaleX(0.806)">Листов :</div>
<div class="ts" style="left:127px;top:247.8px;transform:rotate(-90deg) scaleX(0.744)">Первичное применение</div>
<div class="ts" style="left:127px;top:335.7px;transform:rotate(-90deg) scaleX(0.760)">Справ. N</div>
<div class="ts" style="left:127px;top:478.7px;transform:rotate(-90deg) scaleX(0.730)">Подп. и дата</div>
<div class="ts" style="left:127px;top:537.3px;transform:rotate(-90deg) scaleX(0.734)">Инв. N дубл.</div>
<div class="ts" style="left:127px;top:595.5px;transform:rotate(-90deg) scaleX(0.738)">Взам. инв. N</div>
<div class="ts" style="left:127px;top:652.0px;transform:rotate(-90deg) scaleX(0.712)">Подп. и дата</div>
<div class="ts" style="left:127px;top:711.7px;transform:rotate(-90deg) scaleX(0.730)">Инв. N подл.</div>
<!-- scrollbars -->
<div class="a" style="left:1007px;top:122px;width:15px;height:630px;overflow:hidden">
 <div class="a trk" style="left:0;top:0;width:16px;height:630px"></div>
 <div class="a sbtn" style="left:0;top:0"><svg class="a" style="left:3px;top:5px" width="9" height="5"><path d="M0 4.5h8l-4-4z" fill="#000"/></svg></div>
 <div class="a sbtn" style="left:0;top:307px"></div>
 <div class="a sbtn" style="left:0;top:614px"><svg class="a" style="left:3px;top:5px" width="9" height="5"><path d="M0 0.5h8l-4 4z" fill="#000"/></svg></div>
</div>
<div class="a" style="left:787px;top:751px;width:221px;height:15px;overflow:hidden">
 <div class="a trk" style="left:0;top:0;width:221px;height:16px"></div>
 <div class="a sbtn" style="left:0;top:0"><svg class="a" style="left:5px;top:3px" width="5" height="9"><path d="M4.5 0v8l-4-4z" fill="#000"/></svg></div>
 <div class="a sbtn" style="left:103px;top:0"></div>
 <div class="a sbtn" style="left:205px;top:0"><svg class="a" style="left:5px;top:3px" width="5" height="9"><path d="M0.5 0v8l4-4z" fill="#000"/></svg></div>
</div>
<div class="a" style="left:1008px;top:752px;width:14px;height:14px;background:#D4D0C8"></div>
<div class="a" style="left:1007px;top:751px;width:15px;height:1px;background:#000"></div>
<div class="a" style="left:1007px;top:751px;width:1px;height:15px;background:#000"></div>
<div class="a" style="left:1022px;top:122px;width:2px;height:646px;background:#D4D0C8"></div>
<!-- tab bar -->
<div class="a" style="left:63px;top:751px;width:724px;height:16px;background:#C0C0C0;border-top:1px solid #000"></div>
<div class="a" style="left:124px;top:751px;width:62px;height:1px;background:#fff"></div>
<div class="a" style="left:783px;top:751px;width:1px;height:16px;background:#000"></div>
<div class="a" style="left:784px;top:752px;width:2px;height:15px;background:#fff"></div>
<div class="a" style="left:786px;top:752px;width:1px;height:15px;background:#808080"></div>
<div class="a tbb" style="left:63px"><svg class="a" style="left:3px;top:3px" width="9" height="9"><path d="M1.5 0v9" stroke="#808080" stroke-width="1.5"/><path d="M8 0.5v8l-5-4z" fill="#808080"/></svg></div>
<div class="a tbb" style="left:78px"><svg class="a" style="left:4px;top:3px" width="9" height="9"><path d="M5.5 0.5v8l-5-4z" fill="#808080"/></svg></div>
<div class="a tbb" style="left:93px"><svg class="a" style="left:4px;top:3px" width="9" height="9"><path d="M0.5 0.5v8l5-4z" fill="#808080"/></svg></div>
<div class="a tbb" style="left:108px"><svg class="a" style="left:3px;top:3px" width="9" height="9"><path d="M0.5 0.5v8l5-4z" fill="#808080"/><path d="M7.5 0v9" stroke="#808080" stroke-width="1.5"/></svg></div>
<svg class="a" style="left:120px;top:750px" width="80" height="18">
 <path d="M3.5 1L12 15h47l7.5-14z" fill="#fff"/>
 <path d="M3.5 1L12.5 15.5h46.5L66.5 1.5H80" fill="none" stroke="#000" stroke-width="1.2"/>
</svg>
<div class="a" style="left:137px;top:752px;font-weight:bold;font-size:11.5px;line-height:14px;white-space:nowrap">Лист1</div>
<div class="a" style="left:0;top:766px;width:1024px;height:2px;background:#D4D0C8"></div>
</body></html>
